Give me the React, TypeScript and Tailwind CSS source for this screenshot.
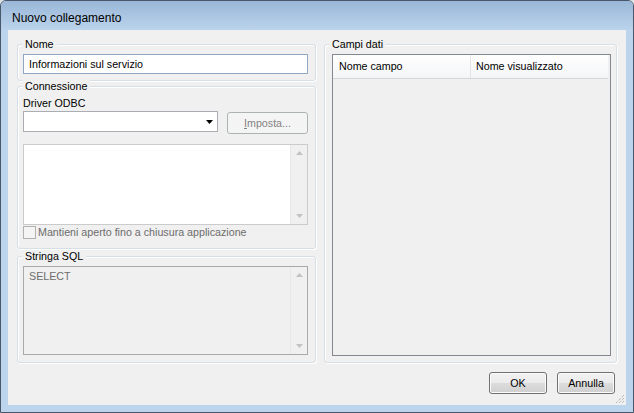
import type { ReactNode } from 'react'

function GroupBox({ label, className, children }: { label: string; className: string; children?: ReactNode }) {
  return (
    <div
      className={`relative rounded-[3px] border border-[#d5dfe5] shadow-[inset_1px_1px_0_#ffffff,1px_1px_0_#ffffff] ${className}`}
    >
      <span className="absolute -top-[7px] left-[4px] bg-[#f0f0f0] px-[3px] leading-[13px] text-black">{label}</span>
      {children}
    </div>
  )
}

function Arrow({ up, color }: { up?: boolean; color: string }) {
  return (
    <svg width="7" height="4" viewBox="0 0 7 4">
      <path d={up ? 'M3.5 0L7 4H0z' : 'M0 0h7L3.5 4z'} fill={color} />
    </svg>
  )
}

function ScrollBar() {
  return (
    <div className="flex w-[17px] flex-col justify-between border-l border-[#e8e8e8] bg-[#f0f0f0] py-[6px]">
      <div className="flex justify-center">
        <Arrow up color="#c2c2c2" />
      </div>
      <div className="flex justify-center">
        <Arrow color="#c2c2c2" />
      </div>
    </div>
  )
}

function Button({ children }: { children: ReactNode }) {
  return (
    <button className="h-[22px] w-[58px] rounded-[3px] border border-[#707070] bg-[linear-gradient(to_bottom,#f2f2f2_0%,#ebebeb_50%,#dddddd_50%,#cfcfcf_100%)] text-[10.7px] leading-[13px] text-black shadow-[inset_0_0_0_1px_#fcfcfc]">
      {children}
    </button>
  )
}

export default function App() {
  return (
    <div className="h-[413px] w-[634px] bg-[#dfe3e8] font-['Liberation_Sans',Arial,sans-serif] text-[10.7px] leading-[13px]">
      <div className="flex h-full flex-col rounded-t-[6px] border border-[#48586a] bg-[#bcd4ec]">
        <div className="h-[29px] rounded-t-[5px] bg-gradient-to-b from-[#9ab7d8] to-[#bbd3ec] pl-[11px] pt-[10px] text-[12px] leading-[14px] text-black">
          Nuovo collegamento
        </div>

        <div className="relative mx-[7px] flex flex-1 flex-col bg-[#f0f0f0] pl-[9px] pt-[14px]">
          <div className="flex gap-[8px]">
            <div className="flex w-[299px] flex-col">
              <GroupBox label="Nome" className="h-[37px] pl-[5px] pr-[7px] pt-[9px]">
                <div className="flex h-[20px] items-center border border-[#8fa6c3] bg-white pl-[5px] text-black">
                  Informazioni sul servizio
                </div>
              </GroupBox>

              <GroupBox label="Connessione" className="mt-[5px] h-[163px] pl-[5px] pr-[7px] pt-[10px]">
                <div className="text-black">Driver ODBC</div>
                <div className="mt-[1px] flex items-start">
                  <div className="flex h-[21px] w-[195px] items-center justify-end border border-[#abadb3] bg-white pr-[4px]">
                    <Arrow color="#000000" />
                  </div>
                  <div className="ml-[9px] mt-[1px] flex h-[22px] w-[81px] items-center justify-center rounded-[3px] border border-[#adb2b5] bg-[#f4f4f4] text-[#838383]">
                    <span>
                      <span className="underline">I</span>mposta...
                    </span>
                  </div>
                </div>
                <div className="mt-[10px] flex h-[81px] border border-[#cbcbcb] bg-white">
                  <div className="flex-1" />
                  <ScrollBar />
                </div>
                <div className="mt-[1px] flex items-center gap-[2px]">
                  <div className="h-[13px] w-[13px] border border-[#b1b1b1] bg-[#f4f4f4]" />
                  <span className="text-[#6d6d6d]">Mantieni aperto fino a chiusura applicazione</span>
                </div>
              </GroupBox>

              <GroupBox label="Stringa SQL" className="mt-[7px] h-[107px] pl-[5px] pr-[7px] pt-[9px]">
                <div className="flex h-[89px] border border-[#a9a9a9] bg-[#f0f0f0]">
                  <div className="flex-1 pl-[5px] pt-[3px] text-[#6d6d6d]">SELECT</div>
                  <ScrollBar />
                </div>
              </GroupBox>
            </div>

            <GroupBox label="Campi dati" className="h-[319px] w-[293px] pl-[7px] pt-[9px]">
              <div className="h-[302px] w-[279px] border border-[#828790] bg-[#f0f0f0] pr-[2px]">
                <div className="flex h-[24px] border-b border-[#d5d5d5] bg-gradient-to-b from-[#ffffff] to-[#f4f5f7] text-black">
                  <div className="flex w-[138px] items-center border-r border-[#e3e4e6] pl-[6px]">Nome campo</div>
                  <div className="flex flex-1 items-center pl-[5px]">Nome visualizzato</div>
                </div>
              </div>
            </GroupBox>
          </div>

          <div className="mt-[9px] flex justify-end gap-[10px] pr-[11px]">
            <Button>OK</Button>
            <Button>Annulla</Button>
          </div>

          <svg className="absolute bottom-[1px] right-[1px]" width="10" height="10" viewBox="0 0 10 10">
            <path d="M9 1L1 9M9 4L4 9M9 7L7 9" stroke="#a0a0a0" strokeWidth="1" strokeDasharray="1 1" />
          </svg>
        </div>

        <div className="h-[7px]" />
      </div>
    </div>
  )
}
